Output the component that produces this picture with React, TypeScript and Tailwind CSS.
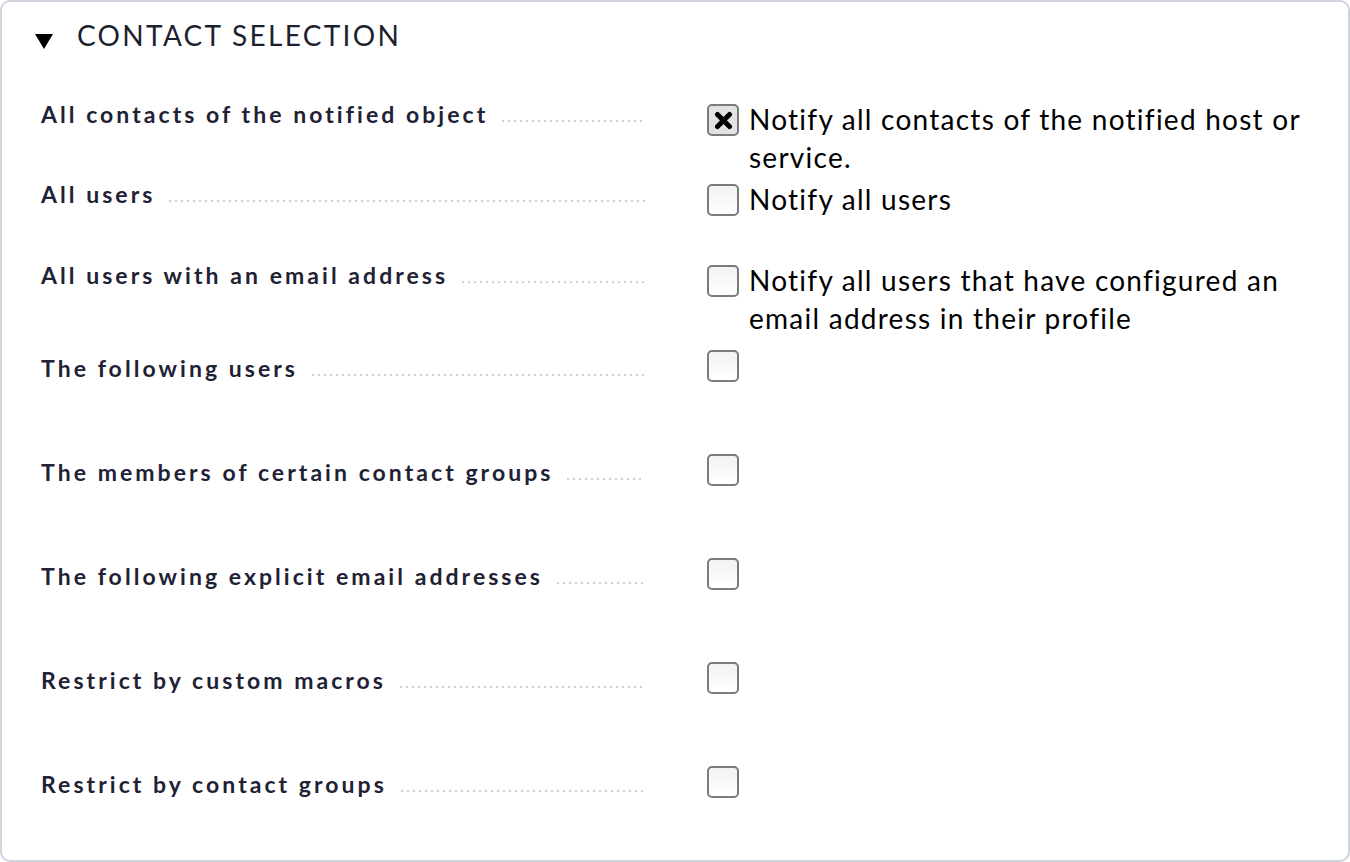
import React from "react";

type Row = {
  label: string;
  text?: string;
  checked?: boolean;
  h: string;
  pad: string;
};

const rows: Row[] = [
  { label: "All contacts of the notified object", text: "Notify all contacts of the notified host or service.", checked: true, h: "h-[80px]", pad: "pt-0" },
  { label: "All users", text: "Notify all users", h: "h-[81px]", pad: "pt-0" },
  { label: "All users with an email address", text: "Notify all users that have configured an email address in their profile", h: "h-[85px]", pad: "pt-0" },
  { label: "The following users", h: "h-[104px]", pad: "pt-[8px]" },
  { label: "The members of certain contact groups", h: "h-[104px]", pad: "pt-[8px]" },
  { label: "The following explicit email addresses", h: "h-[104px]", pad: "pt-[8px]" },
  { label: "Restrict by custom macros", h: "h-[104px]", pad: "pt-[8px]" },
  { label: "Restrict by contact groups", h: "h-[104px]", pad: "pt-[8px]" },
];

function Checkbox({ checked }: { checked?: boolean }) {
  return (
    <div
      className={
        "mt-[4px] flex h-[32px] w-[32px] shrink-0 items-center justify-center rounded-[5px] border-2 border-[#7b7b7b] " +
        (checked ? "bg-[#e2e2e2]" : "bg-gradient-to-b from-[#f2f2f2] to-white")
      }
    >
      {checked && (
        <svg width="19" height="19" viewBox="0 0 19 19">
          <path d="M3.5 3.5 L15.5 15.5 M15.5 3.5 L3.5 15.5" stroke="#000" strokeWidth="5" strokeLinecap="round" />
        </svg>
      )}
    </div>
  );
}

export default function App() {
  return (
    <div className="h-[862px] w-[1350px] bg-white" style={{ fontFamily: "Lato, 'Open Sans', sans-serif" }}>
      <div className="box-border h-[862px] w-[1350px] rounded-[10px] border-2 border-[#cfd2df] bg-white">
        {/* header */}
        <div className="flex h-[98px] items-start pl-[33px] pt-[16px]">
          <svg width="18" height="16" viewBox="0 0 18 16" className="mt-[16px]">
            <polygon points="0,0 18,0 9,15" fill="#000" />
          </svg>
          <span className="ml-[24px] text-[28px] leading-[34px] tracking-[2.3px] text-[#1c1f2e]">CONTACT SELECTION</span>
        </div>

        {/* rows */}
        <div className="flex flex-col pl-[39px]">
          {rows.map((r) => (
            <div key={r.label} className={"flex items-start " + r.h}>
              <div className={"-mt-[1px] flex w-[604px] items-baseline " + r.pad}>
                <span className="whitespace-nowrap text-[23px] font-bold leading-[30px] tracking-[3.05px] text-[#1e2234]">
                  {r.label}
                </span>
                <span className="ml-[12px] h-[4px] flex-1 bg-[radial-gradient(circle,#d0d0d0_1.2px,transparent_1.6px)] bg-[length:6px_4px] bg-repeat-x" />
              </div>
              <div className="ml-[62px] flex items-start">
                <Checkbox checked={r.checked} />
                {r.text && (
                  <span className="ml-[10px] w-[565px] text-[28px] leading-[38px] tracking-[1.25px] text-black">{r.text}</span>
                )}
              </div>
            </div>
          ))}
        </div>
      </div>
    </div>
  );
}
